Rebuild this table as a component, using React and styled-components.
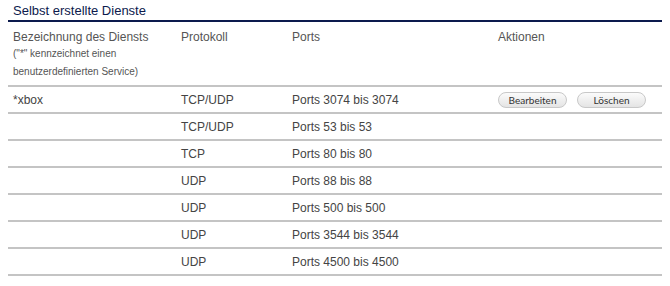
import React from 'react'
import styled, { createGlobalStyle } from 'styled-components'

const Global = createGlobalStyle`
  body {
    margin: 3px 8px 8px;
    background: #fff;
    font-family: "Liberation Sans", Arial, sans-serif;
  }
`

const Panel = styled.div`
  width: 654px;
`

const Title = styled.div`
  font-size: 13px;
  color: #0c1a4d;
  padding: 0 0 1px 5px;
  line-height: 16px;
  border-bottom: 2px solid #0c1a4d;
`

const Row = styled.div`
  display: grid;
  grid-template-columns: 168px 111px 206px 169px;
  border-bottom: 2px solid #c4c4c4;
  height: ${p => (p.$head ? '56px' : '25px')};
  align-items: ${p => (p.$head ? 'start' : 'center')};
  padding-top: ${p => (p.$head ? '7px' : '0')};
  box-sizing: content-box;
`

const Cell = styled.div`
  padding-left: 5px;
  font-size: 12px;
  color: ${p => (p.$head ? '#555' : '#444')};
  line-height: 16px;
`

const Note = styled.div`
  font-size: 10px;
  line-height: 18px;
  color: #555;
`

const Actions = styled.div`
  display: flex;
  gap: 10px;
  padding-left: 5px;
`

const Btn = styled.button`
  width: ${p => p.$w}px;
  height: 16px;
  padding: 0;
  border: 1px solid #c8c8c8;
  border-radius: 8px;
  background: linear-gradient(#fbfbfb, #e4e4e4);
  font-family: Lato, "Liberation Sans", sans-serif;
  font-size: 10px;
  color: #333;
  line-height: 14px;
`

const rows = [
  ['*xbox', 'TCP/UDP', 'Ports 3074 bis 3074', true],
  ['', 'TCP/UDP', 'Ports 53 bis 53'],
  ['', 'TCP', 'Ports 80 bis 80'],
  ['', 'UDP', 'Ports 88 bis 88'],
  ['', 'UDP', 'Ports 500 bis 500'],
  ['', 'UDP', 'Ports 3544 bis 3544'],
  ['', 'UDP', 'Ports 4500 bis 4500']
]

export default function App () {
  return (
    <Panel>
      <Global />
      <Title>Selbst erstellte Dienste</Title>
      <Row $head>
        <Cell $head>
          Bezeichnung des Diensts
          <Note>("*" kennzeichnet einen<br />benutzerdefinierten Service)</Note>
        </Cell>
        <Cell $head>Protokoll</Cell>
        <Cell $head>Ports</Cell>
        <Cell $head>Aktionen</Cell>
      </Row>
      {rows.map(([name, proto, ports, act], i) => (
        <Row key={i}>
          <Cell>{name}</Cell>
          <Cell>{proto}</Cell>
          <Cell>{ports}</Cell>
          {act ? (
            <Actions>
              <Btn $w={69}>Bearbeiten</Btn>
              <Btn $w={69}>Löschen</Btn>
            </Actions>
          ) : <div />}
        </Row>
      ))}
    </Panel>
  )
}
